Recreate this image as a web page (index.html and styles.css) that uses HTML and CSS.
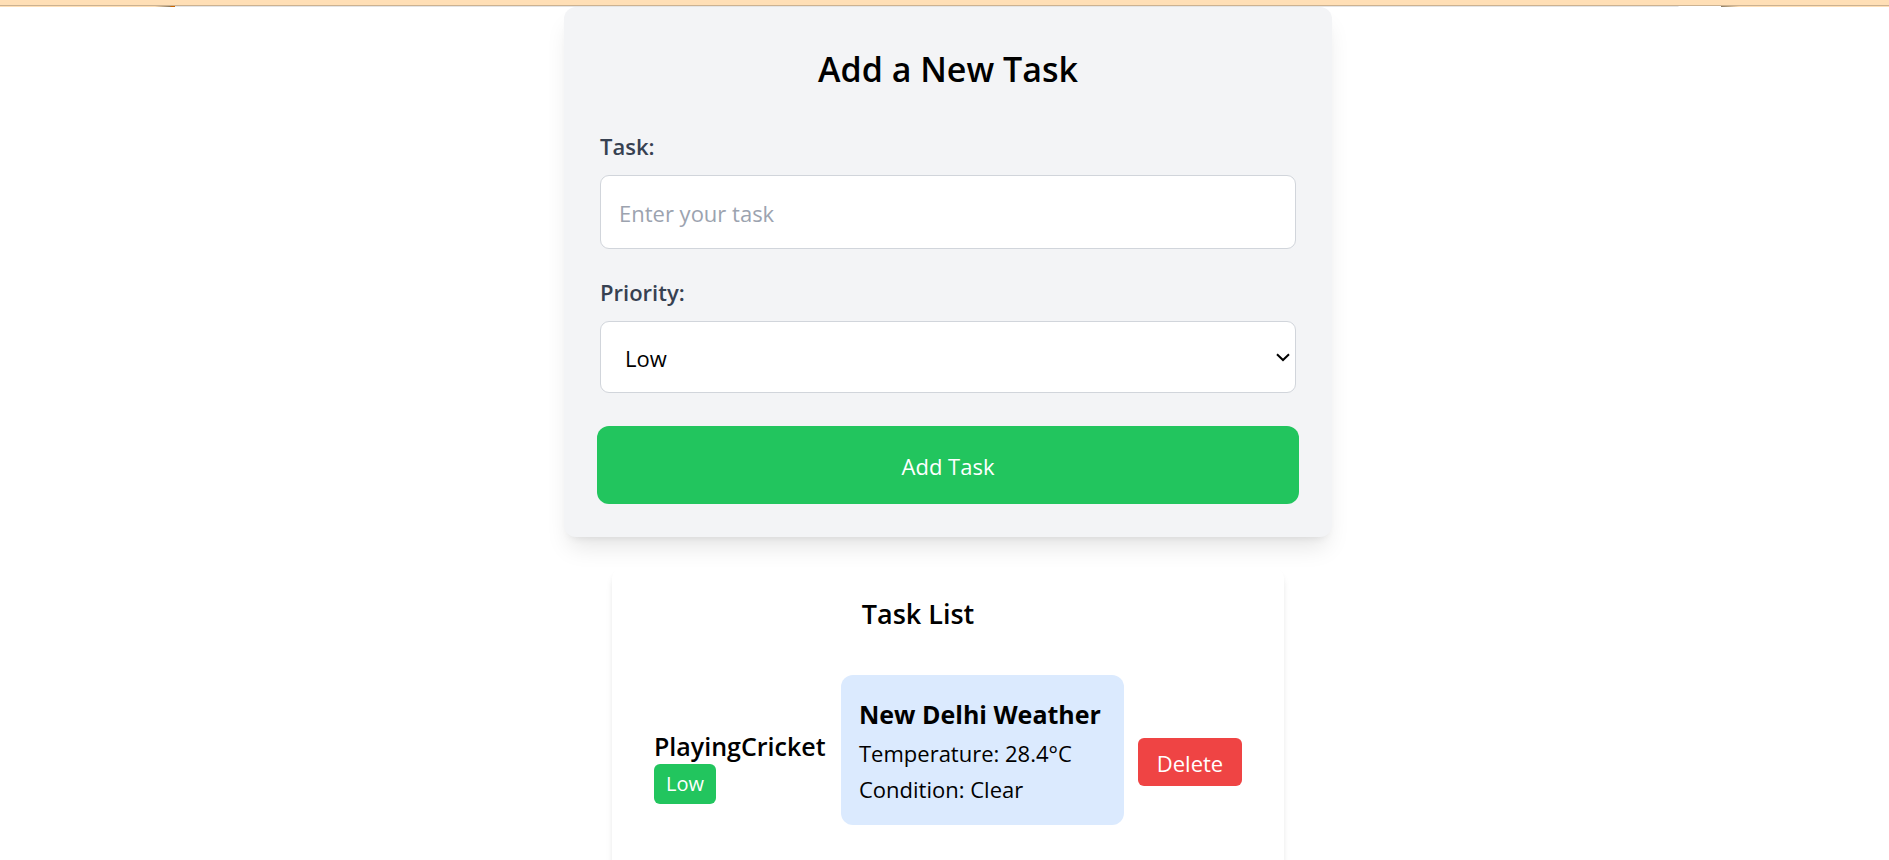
FILE: index.html
```html
<!DOCTYPE html>
<html lang="en">
<head>
<meta charset="utf-8">
<meta name="viewport" content="width=device-width, initial-scale=1">
<title>Task Manager</title>
<link rel="stylesheet" href="styles.css">
</head>
<body>
<header class="topbar"></header>
<div class="topbar-edge"></div>
<main class="page">
  <form class="form-card">
    <h1 class="form-title">Add a New Task</h1>
    <div class="field">
      <label class="label" for="task">Task:</label>
      <input class="control" id="task" type="text" placeholder="Enter your task">
    </div>
    <div class="field">
      <label class="label" for="priority">Priority:</label>
      <div class="select-wrap">
        <select class="control select" id="priority">
          <option selected>Low</option>
          <option>Medium</option>
          <option>High</option>
        </select>
        <svg class="chevron" viewBox="0 0 14 9" aria-hidden="true"><path d="M1 1.2 L7 7 L13 1.2" fill="none" stroke="#000" stroke-width="2"/></svg>
      </div>
    </div>
    <button class="add-button" type="button">Add Task</button>
  </form>
  <section class="list-card">
    <h2 class="list-title">Task List</h2>
    <ul class="tasks">
      <li class="task">
        <div class="task-info">
          <span class="task-name">PlayingCricket</span>
          <span class="badge">Low</span>
        </div>
        <div class="weather">
          <h3 class="weather-title">New Delhi Weather</h3>
          <p class="weather-line">Temperature: 28.4°C</p>
          <p class="weather-line">Condition: Clear</p>
        </div>
        <button class="delete-button" type="button">Delete</button>
      </li>
    </ul>
  </section>
</main>
</body>
</html>
```

FILE: styles.css
```css
* {
  box-sizing: border-box;
  margin: 0;
  padding: 0;
}

html {
  scrollbar-width: none;
}

body {
  background: #fff;
  color: #000;
  font-family: "Segoe UI", "Open Sans", sans-serif;
  font-size: 22px;
  line-height: 36px;
}

button,
input,
select {
  font: inherit;
}

.topbar {
  height: 6px;
  background: #ffdfb6;
  border-bottom: 1px solid #ccb291;
}

.topbar-edge {
  height: 1px;
  background: linear-gradient(90deg, #ffdfb6 0 155px, #8a7a60 170px, #cc6600 171px 175px, #e5e5e5 175px calc(100% - 211px), #fff calc(100% - 210px) calc(100% - 168px), #8a7a60 calc(100% - 168px), #ffdfb6 calc(100% - 150px));
}

.page {
  display: flex;
  flex-direction: column;
  align-items: center;
  gap: 30px;
  padding-left: 7px;
}

.form-card {
  width: 100%;
  max-width: 768px;
  padding: 35px 36px 33px;
  background: #f3f4f6;
  border-radius: 12px;
  box-shadow: 0 15px 23px -5px rgba(0, 0, 0, 0.1), 0 6px 9px -6px rgba(0, 0, 0, 0.1);
}

.form-title {
  margin-bottom: 36px;
  font-size: 34px;
  font-weight: 600;
  line-height: 54px;
  text-align: center;
}

.field {
  display: flex;
  flex-direction: column;
  gap: 15px;
  margin-bottom: 29px;
}

.label {
  color: #374151;
  font-weight: 600;
  line-height: 28px;
}

.control {
  display: block;
  width: 100%;
  height: 74px;
  padding: 2px 18px 0;
  border: 1px solid #d1d5db;
  border-radius: 9px;
  background: #fff;
  color: #000;
}

.control::placeholder {
  color: #9ca3af;
  opacity: 1;
}

.select-wrap {
  position: relative;
}

.select {
  height: 72px;
  padding: 2px 24px 0;
  appearance: none;
}

.chevron {
  position: absolute;
  top: 32px;
  right: 6px;
  width: 14px;
  height: 9px;
  pointer-events: none;
}

.add-button {
  display: block;
  width: calc(100% + 6px);
  height: 78px;
  margin: 33px -3px 0;
  padding-top: 2px;
  border: 0;
  border-radius: 12px;
  background: #22c55e;
  color: #fff;
}

.list-card {
  width: 100%;
  max-width: 672px;
  padding: 26px 42px 60px;
  background: #fff;
  border-radius: 12px;
  box-shadow: 0 6px 9px -2px rgba(0, 0, 0, 0.1), 0 3px 6px -3px rgba(0, 0, 0, 0.1);
}

.list-title {
  margin-bottom: 40px;
  padding-right: 60px;
  font-size: 27px;
  font-weight: 600;
  line-height: 42px;
  text-align: center;
}

.tasks {
  list-style: none;
}

.task {
  display: flex;
  align-items: center;
  gap: 14px;
}

.task-info {
  display: flex;
  flex-direction: column;
  align-items: flex-start;
  width: 173px;
  padding-top: 32px;
}

.task-name {
  font-size: 25px;
  font-weight: 600;
}

.badge {
  padding: 0 12px;
  border-radius: 6px;
  background: #22c55e;
  color: #fff;
  font-size: 20px;
  line-height: 40px;
}

.weather {
  flex: 1;
  padding: 18px;
  border-radius: 12px;
  background: #dbeafe;
  white-space: nowrap;
}

.weather-title {
  font-size: 25px;
  font-weight: 700;
  line-height: 42px;
}

.delete-button {
  width: 104px;
  height: 48px;
  margin-top: 24px;
  padding-top: 2px;
  border: 0;
  border-radius: 6px;
  background: #ef4444;
  color: #fff;
}
```
